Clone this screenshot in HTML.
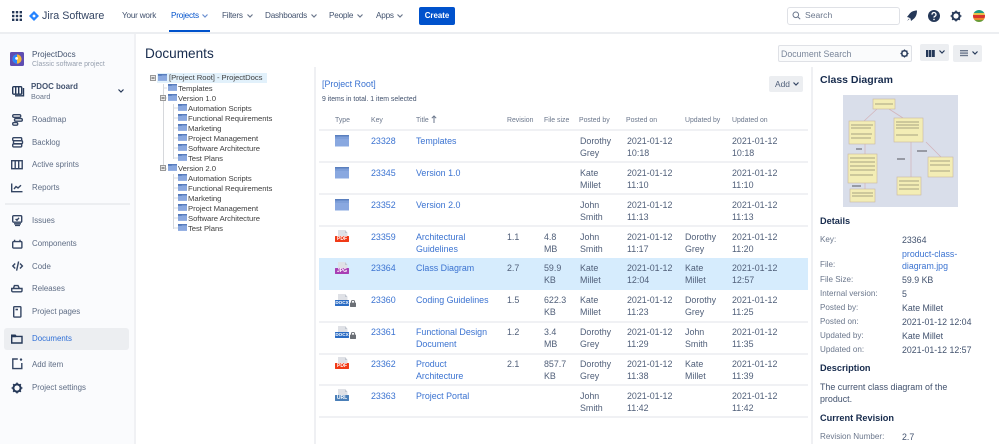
<!DOCTYPE html>
<html><head><meta charset="utf-8"><style>
html,body{margin:0;padding:0;width:999px;height:444px;overflow:hidden;background:#fff}
body{position:relative;font-family:"Liberation Sans",sans-serif;font-size:9px;color:#172b4d;filter:blur(.3px)}
.t{position:absolute;white-space:nowrap;line-height:12px}
.b{position:absolute}
svg{position:absolute;overflow:visible}
.n{font-size:8.2px;letter-spacing:-.22px;color:#42526e;top:10px}
.s{font-size:7.9px;color:#5e6c84;left:32px}
.tr{font-size:7.7px;letter-spacing:-.05px;color:#3f3f3f;line-height:10px}
.h{font-size:6.9px;color:#6b778c;top:114.5px}
.l{color:#3b73d1;font-size:8.9px}
.c{color:#505f79;font-size:8.9px}
.dk{font-size:8.1px;color:#6b778c;left:820px}
.dv{font-size:8.8px;color:#42526e;left:902px}
.dh{font-size:9.2px;font-weight:bold;color:#172b4d;left:820px}
.r{position:absolute;left:319px;width:489px;height:2px;background:#f0f1f4}
.i{fill:none;stroke:#344563;stroke-width:1.4}
</style></head><body>
<svg width="0" height="0"><defs>
<symbol id="f" viewBox="0 0 14 12"><rect width="14" height="11.5" fill="#7d9fdb"/><rect width="14" height="1.6" fill="#5a7fbe"/><path d="M0 3L5 1.8H14V11.5H0Z" fill="#89a8e0"/><path d="M0 3H14" stroke="#5f84c4" stroke-width=".5"/></symbol>
<symbol id="tf" viewBox="0 0 12 9"><rect width="12" height="9" fill="#8aa8df"/><rect width="12" height="1.6" fill="#4f76b8"/><rect x="0" y="0" width="5" height="2.2" fill="#4f76b8"/></symbol>
<symbol id="doc" viewBox="0 0 14 14"><path d="M3 0H10L12.5 3V12H3Z" fill="#dfe1e6"/><path d="M10 0L12.5 3H10Z" fill="#c1c7d0"/><rect x="0" y="6" width="14" height="6" rx=".5" fill="currentColor"/></symbol>
<symbol id="lk" viewBox="0 0 6 7"><rect x="0" y="2.6" width="6" height="4.4" rx=".6" fill="#6b6f76"/><path d="M1.4 3V1.8a1.6 1.6 0 0 1 3.2 0V3" fill="none" stroke="#6b6f76"/></symbol>
<symbol id="ck" viewBox="0 0 8 6"><path d="M1.5 1.5L4 4L6.5 1.5" fill="none" stroke="currentColor" stroke-width="1.2"/></symbol>
<symbol id="gear" viewBox="0 0 12 12"><circle cx="6" cy="6" r="3.6" fill="none" stroke="currentColor" stroke-width="2"/><path d="M6 .6V2M6 10V11.4M.6 6H2M10 6H11.4M2.2 2.2L3.2 3.2M8.8 8.8L9.8 9.8M2.2 9.8L3.2 8.8M8.8 3.2L9.8 2.2" stroke="currentColor" stroke-width="1.6"/></symbol>
</defs></svg>

<!-- top bar -->
<div class="b" style="left:0;top:32px;width:999px;height:2px;background:#eceef1"></div>
<svg style="left:12px;top:11px" width="10" height="10" fill="#253858"><rect width="2.4" height="2.4"/><rect x="3.8" width="2.4" height="2.4"/><rect x="7.6" width="2.4" height="2.4"/><rect y="3.8" width="2.4" height="2.4"/><rect x="3.8" y="3.8" width="2.4" height="2.4"/><rect x="7.6" y="3.8" width="2.4" height="2.4"/><rect y="7.6" width="2.4" height="2.4"/><rect x="3.8" y="7.6" width="2.4" height="2.4"/><rect x="7.6" y="7.6" width="2.4" height="2.4"/></svg>
<svg style="left:29px;top:11px" width="10" height="10"><path d="M5 0L10 5L5 10L0 5Z" fill="#2684ff"/><path d="M5 3.2L6.8 5L5 6.8L3.2 5Z" fill="#fff"/></svg>
<div class="t" style="left:42px;top:9px;font-size:10.7px;color:#344563;line-height:14px">Jira Software</div>
<div class="t n" style="left:122px">Your work</div>
<div class="t n" style="left:171px;color:#0052cc">Projects</div>
<svg style="left:201px;top:13px;color:#6b8fd0" width="8" height="6"><use href="#ck"/></svg>
<div class="b" style="left:169px;top:30px;width:41px;height:2px;background:#0052cc"></div>
<div class="t n" style="left:222px">Filters</div>
<svg style="left:246px;top:13px;color:#6b778c" width="8" height="6"><use href="#ck"/></svg>
<div class="t n" style="left:265px">Dashboards</div>
<svg style="left:310px;top:13px;color:#6b778c" width="8" height="6"><use href="#ck"/></svg>
<div class="t n" style="left:329px">People</div>
<svg style="left:356px;top:13px;color:#6b778c" width="8" height="6"><use href="#ck"/></svg>
<div class="t n" style="left:376px">Apps</div>
<svg style="left:396px;top:13px;color:#6b778c" width="8" height="6"><use href="#ck"/></svg>
<div class="b" style="left:419px;top:7px;width:36px;height:18px;background:#0052cc;border-radius:2px"></div>
<div class="t" style="left:419px;top:10px;width:36px;text-align:center;color:#fff;font-size:7.9px;font-weight:bold">Create</div>
<div class="b" style="left:787px;top:7px;width:111px;height:16px;border:1px solid #dfe1e6;border-radius:3px"></div>
<svg style="left:792px;top:11px" width="9" height="9" fill="none" stroke="#6b778c" stroke-width="1"><circle cx="3.8" cy="3.8" r="2.8"/><path d="M6 6L8.2 8.2"/></svg>
<div class="t" style="left:805px;top:9px;font-size:8.6px;color:#6b778c">Search</div>
<svg style="left:906px;top:10px" width="12" height="12" fill="#253858"><path d="M1 7L3 4.5C5 1.5 8 .5 11 .5C11 4 10 7 7.5 9L5 11L4.5 8.5L2.8 7.5Z"/><path d="M1 11L3 8.5L3.5 9Z"/></svg>
<svg style="left:928px;top:10px" width="12" height="12"><circle cx="6" cy="6" r="6" fill="#253858"/><path d="M4 4.6A2 2 0 1 1 6.6 6.4C6 6.7 6 7 6 7.6" fill="none" stroke="#fff" stroke-width="1.3"/><circle cx="6" cy="9.4" r=".8" fill="#fff"/></svg>
<svg style="left:950px;top:10px;color:#253858" width="12" height="12"><use href="#gear"/></svg>
<svg style="left:973px;top:10px" width="12" height="12"><defs><clipPath id="av"><circle cx="6" cy="6" r="6"/></clipPath></defs><g clip-path="url(#av)"><rect width="12" height="3" fill="#1f9a82"/><rect y="3" width="12" height="2" fill="#e8c14a"/><rect y="5" width="12" height="3" fill="#d9352c"/><rect y="8" width="12" height="2" fill="#e88a2d"/><rect y="10" width="12" height="2" fill="#6a9a35"/></g></svg>

<!-- sidebar -->
<div class="b" style="left:0;top:34px;width:134px;height:410px;background:#fafbfd;border-right:2px solid #f0f1f4"></div>
<svg style="left:10px;top:52px" width="14" height="14"><rect width="14" height="14" rx="1.5" fill="#5e4db2"/><circle cx="7" cy="7" r="4.6" fill="#f5b93a"/><path d="M7 2.4A4.6 4.6 0 0 0 7 11.6Z" fill="#2684ff"/><circle cx="6.6" cy="6.4" r="1.4" fill="#fff"/></svg>
<div class="t" style="left:32px;top:49px;font-size:8.1px;color:#42526e">ProjectDocs</div>
<div class="t" style="left:32px;top:59px;font-size:6.9px;color:#97a0af">Classic software project</div>
<svg class="i" style="left:12px;top:86px;stroke:#253858" width="13" height="11"><rect x=".7" y=".7" width="9" height="7.5" rx="1"/><path d="M3.7 .7V8M6.7 .7V8M11.5 2V9.8H3"/></svg>
<div class="t" style="left:31px;top:81px;font-size:7.9px;font-weight:bold;color:#42526e">PDOC board</div>
<div class="t" style="left:31px;top:91px;font-size:7.3px;color:#6b778c">Board</div>
<svg style="left:117px;top:88px;color:#253858" width="8" height="6"><use href="#ck"/></svg>

<svg class="i" style="left:12px;top:114px" width="11" height="12"><rect x=".7" y=".7" width="8" height="2.6" rx="1.2"/><rect x="2.5" y="4.6" width="7.8" height="2.6" rx="1.2"/><rect x=".7" y="8.6" width="5" height="2.6" rx="1.2"/></svg>
<svg class="i" style="left:12px;top:137px" width="11" height="11"><rect x=".7" y=".7" width="9" height="3" rx="1"/><rect x="1.5" y="3.7" width="9" height="3" rx="1"/><rect x=".7" y="6.9" width="9" height="3" rx="1"/></svg>
<svg class="i" style="left:11px;top:160px" width="12" height="10"><rect x=".7" y=".7" width="10.5" height="8"/><path d="M4.2 .7V8.7M7.7 .7V8.7"/></svg>
<svg class="i" style="left:11px;top:183px" width="12" height="10"><path d="M.7 .5V8.7H11.5M3 6L5 3.6L7 5L10 2.2"/></svg>
<div class="t s" style="top:114px">Roadmap</div>
<div class="t s" style="top:137px">Backlog</div>
<div class="t s" style="top:159px">Active sprints</div>
<div class="t s" style="top:182px">Reports</div>
<div class="b" style="left:5px;top:203px;width:125px;height:2px;background:#eceef1"></div>
<svg class="i" style="left:12px;top:215px" width="11" height="11"><rect x=".7" y=".7" width="9" height="6.5" rx="1"/><path d="M2 8.8H9M3 10.4H8M3.6 4L5 5.2L7 2.8"/></svg>
<svg class="i" style="left:12px;top:239px" width="11" height="10"><rect x=".7" y="2.6" width="9.2" height="6.5" rx="1"/><path d="M2.6 2.6V.8M8 2.6V.8"/></svg>
<svg class="i" style="left:12px;top:261px" width="11" height="11"><path d="M3.2 2.5L.8 5L3.2 7.5M8 2.5L10.4 5L8 7.5M6.6 .5L4.6 9.6"/></svg>
<svg class="i" style="left:11px;top:283px" width="12" height="10"><path d="M.7 5.5H11V7.5C11 8.5 10.5 8.8 9.8 8.8H2C1.2 8.8.7 8.5.7 7.5ZM2.4 5.5L3.4 2.6H7L8.4 5.5"/></svg>
<svg class="i" style="left:13px;top:306px" width="9" height="12"><rect x=".7" y=".7" width="7.2" height="10.4" rx=".8"/><path d="M2.5 3.5H5" stroke-width="1.6"/></svg>
<div class="t s" style="top:215px">Issues</div>
<div class="t s" style="top:238px">Components</div>
<div class="t s" style="top:261px">Code</div>
<div class="t s" style="top:283px">Releases</div>
<div class="t s" style="top:306px">Project pages</div>
<div class="b" style="left:4px;top:328px;width:125px;height:22px;background:#eceef1;border-radius:3px"></div>
<svg class="i" style="left:11px;top:334px;stroke:#253858" width="12" height="10"><path d="M.7 9V1.2H4.2L5.2 2.4H11V9ZM.7 2.6H5"/></svg>
<div class="t s" style="top:333px;color:#2f6fd6">Documents</div>
<svg class="i" style="left:12px;top:358px" width="11" height="12"><path d="M5.8 1H.8V10.6H9.8V5"/><circle cx="9" cy="1.6" r="1.2" fill="#344563" stroke="none"/></svg>
<div class="t s" style="top:359px">Add item</div>
<svg style="left:11px;top:382px;color:#253858" width="12" height="12"><use href="#gear"/></svg>
<div class="t s" style="top:382px">Project settings</div>

<!-- heading -->
<div class="t" style="left:145px;top:44.5px;font-size:13.6px;line-height:17px;color:#172b4d">Documents</div>

<!-- search tools -->
<div class="b" style="left:778px;top:45px;width:132px;height:15px;border:1px solid #dfe1e6;border-radius:2px;background:#fafbfc"></div>
<div class="t" style="left:781px;top:48px;font-size:8.8px;color:#7a869a">Document Search</div>
<svg style="left:900px;top:49px;color:#253858" width="9" height="9"><use href="#gear"/></svg>
<div class="b" style="left:920px;top:44px;width:29px;height:17px;background:#eceef1;border-radius:2px"></div>
<svg style="left:926px;top:50px" width="9" height="7" fill="#253858"><rect width="2" height="7"/><rect x="2.6" width="2.6" height="7"/><rect x="5.8" width="3" height="7"/></svg>
<svg style="left:938px;top:49px;color:#253858" width="8" height="6"><use href="#ck"/></svg>
<div class="b" style="left:953px;top:45px;width:29px;height:17px;background:#eceef1;border-radius:2px"></div>
<svg style="left:960px;top:50px" width="8" height="7" fill="#6b778c"><rect width="8" height="1.4"/><rect y="2.4" width="8" height="1.4"/><rect y="4.8" width="8" height="1.4"/></svg>
<svg style="left:971px;top:50px;color:#253858" width="8" height="6"><use href="#ck"/></svg>

<!-- tree -->
<svg style="left:148px;top:72px" width="165" height="165" fill="none" stroke="#d6d8dc" stroke-width="1">
<path d="M15.5 12V97M15.5 16H19M15.5 26H19M15.5 97H19"/>
<path d="M25.5 32V87M25.5 36H30M25.5 46H30M25.5 56H30M25.5 66H30M25.5 76H30M25.5 86H30"/>
<path d="M25.5 102V157M25.5 106H30M25.5 116H30M25.5 126H30M25.5 136H30M25.5 146H30M25.5 156H30"/>
</svg>
<div class="b" style="left:157px;top:73px;width:110px;height:9.5px;background:#e2f1fb"></div>
<svg style="left:150px;top:75px" width="6" height="6"><rect x=".5" y=".5" width="5" height="5" fill="#e8e8e8" stroke="#999"/><path d="M1.5 3H4.5" stroke="#444"/></svg>
<svg style="left:160px;top:95px" width="6" height="6"><rect x=".5" y=".5" width="5" height="5" fill="#e8e8e8" stroke="#999"/><path d="M1.5 3H4.5" stroke="#444"/></svg>
<svg style="left:160px;top:165px" width="6" height="6"><rect x=".5" y=".5" width="5" height="5" fill="#e8e8e8" stroke="#999"/><path d="M1.5 3H4.5" stroke="#444"/></svg>
<svg style="left:158px;top:74px" width="9" height="7"><use href="#tf"/></svg>
<svg style="left:168px;top:84px" width="9" height="7"><use href="#tf"/></svg>
<svg style="left:168px;top:94px" width="9" height="7"><use href="#tf"/></svg>
<svg style="left:178px;top:104px" width="9" height="7"><use href="#tf"/></svg>
<svg style="left:178px;top:114px" width="9" height="7"><use href="#tf"/></svg>
<svg style="left:178px;top:124px" width="9" height="7"><use href="#tf"/></svg>
<svg style="left:178px;top:134px" width="9" height="7"><use href="#tf"/></svg>
<svg style="left:178px;top:144px" width="9" height="7"><use href="#tf"/></svg>
<svg style="left:178px;top:154px" width="9" height="7"><use href="#tf"/></svg>
<svg style="left:168px;top:164px" width="9" height="7"><use href="#tf"/></svg>
<svg style="left:178px;top:174px" width="9" height="7"><use href="#tf"/></svg>
<svg style="left:178px;top:184px" width="9" height="7"><use href="#tf"/></svg>
<svg style="left:178px;top:194px" width="9" height="7"><use href="#tf"/></svg>
<svg style="left:178px;top:204px" width="9" height="7"><use href="#tf"/></svg>
<svg style="left:178px;top:214px" width="9" height="7"><use href="#tf"/></svg>
<svg style="left:178px;top:224px" width="9" height="7"><use href="#tf"/></svg>
<div class="t tr" style="left:169px;top:73px">[Project Root] - ProjectDocs</div>
<div class="t tr" style="left:178px;top:83.5px">Templates</div>
<div class="t tr" style="left:178px;top:93.5px">Version 1.0</div>
<div class="t tr" style="left:188px;top:103.5px">Automation Scripts</div>
<div class="t tr" style="left:188px;top:113.5px">Functional Requirements</div>
<div class="t tr" style="left:188px;top:123.5px">Marketing</div>
<div class="t tr" style="left:188px;top:133.5px">Project Management</div>
<div class="t tr" style="left:188px;top:143.5px">Software Architecture</div>
<div class="t tr" style="left:188px;top:153.5px">Test Plans</div>
<div class="t tr" style="left:178px;top:163.5px">Version 2.0</div>
<div class="t tr" style="left:188px;top:173.5px">Automation Scripts</div>
<div class="t tr" style="left:188px;top:183.5px">Functional Requirements</div>
<div class="t tr" style="left:188px;top:193.5px">Marketing</div>
<div class="t tr" style="left:188px;top:203.5px">Project Management</div>
<div class="t tr" style="left:188px;top:213.5px">Software Architecture</div>
<div class="t tr" style="left:188px;top:223.5px">Test Plans</div>

<!-- dividers -->
<div class="b" style="left:314px;top:67px;width:2px;height:377px;background:#eff0f3"></div>
<div class="b" style="left:811px;top:67px;width:2px;height:377px;background:#eff0f3"></div>

<!-- table header -->
<div class="t" style="left:322px;top:78px;font-size:8.9px;color:#3b73d1">[Project Root]</div>
<div class="t" style="left:322px;top:94px;font-size:6.9px;color:#42526e">9 items in total. 1 item selected</div>
<div class="b" style="left:769px;top:76px;width:34px;height:16px;background:#eceef1;border-radius:2px"></div>
<div class="t" style="left:775px;top:78px;font-size:8.4px;color:#505f79">Add</div>
<svg style="left:792px;top:81px;color:#344563" width="8" height="6"><use href="#ck"/></svg>
<div class="t h" style="left:335px">Type</div>
<div class="t h" style="left:371px">Key</div>
<div class="t h" style="left:416px">Title</div>
<svg style="left:431px;top:115px" width="6" height="8" fill="none" stroke="#6b778c" stroke-width="1"><path d="M3 8V1M.8 3.2L3 1L5.2 3.2"/></svg>
<div class="t h" style="left:507px">Revision</div>
<div class="t h" style="left:544px">File size</div>
<div class="t h" style="left:579px">Posted by</div>
<div class="t h" style="left:626px">Posted on</div>
<div class="t h" style="left:685px">Updated by</div>
<div class="t h" style="left:732px">Updated on</div>

<div class="b" style="left:319px;top:258px;width:489px;height:32px;background:#d6ecfd"></div>
<div class="r" style="top:128.5px"></div>
<div class="r" style="top:160.5px"></div>
<div class="r" style="top:192.5px"></div>
<div class="r" style="top:224.5px"></div>
<div class="r" style="top:320.5px"></div>
<div class="r" style="top:352.5px"></div>
<div class="r" style="top:384px"></div>
<div class="r" style="top:416px"></div>

<!-- icons -->
<svg style="left:335px;top:135px" width="14" height="12"><use href="#f"/></svg>
<svg style="left:335px;top:167px" width="14" height="12"><use href="#f"/></svg>
<svg style="left:335px;top:199px" width="14" height="12"><use href="#f"/></svg>
<svg style="left:335px;top:230px;color:#f03a17" width="14" height="14"><use href="#doc"/></svg>
<div class="t" style="left:335px;top:236px;width:14px;text-align:center;font-size:5px;line-height:6px;color:#fff;font-weight:bold">PDF</div>
<svg style="left:335px;top:262px;color:#a83fb4" width="14" height="14"><use href="#doc"/></svg>
<div class="t" style="left:335px;top:268px;width:14px;text-align:center;font-size:5px;line-height:6px;color:#fff;font-weight:bold">JPG</div>
<svg style="left:335px;top:294px;color:#2b6cc4" width="14" height="14"><use href="#doc"/></svg>
<div class="t" style="left:335px;top:300px;width:14px;text-align:center;font-size:4.6px;line-height:6px;color:#fff;font-weight:bold">DOCX</div>
<svg style="left:350px;top:300px" width="6" height="7"><use href="#lk"/></svg>
<svg style="left:335px;top:326px;color:#2b6cc4" width="14" height="14"><use href="#doc"/></svg>
<div class="t" style="left:335px;top:332px;width:14px;text-align:center;font-size:4.6px;line-height:6px;color:#fff;font-weight:bold">DOCX</div>
<svg style="left:350px;top:332px" width="6" height="7"><use href="#lk"/></svg>
<svg style="left:335px;top:357px;color:#f03a17" width="14" height="14"><use href="#doc"/></svg>
<div class="t" style="left:335px;top:363px;width:14px;text-align:center;font-size:5px;line-height:6px;color:#fff;font-weight:bold">PDF</div>
<svg style="left:335px;top:389px;color:#4a7fb8" width="14" height="14"><use href="#doc"/></svg>
<div class="t" style="left:335px;top:395px;width:14px;text-align:center;font-size:5px;line-height:6px;color:#fff;font-weight:bold">URL</div>

<!-- rows -->
<div class="t l" style="left:371px;top:135px">23328</div><div class="t l" style="left:416px;top:135px">Templates</div>
<div class="t c" style="left:580px;top:135px;line-height:12px">Dorothy<br>Grey</div><div class="t c" style="left:627px;top:135px">2021-01-12<br>10:18</div><div class="t c" style="left:732px;top:135px">2021-01-12<br>10:18</div>

<div class="t l" style="left:371px;top:167px">23345</div><div class="t l" style="left:416px;top:167px">Version 1.0</div>
<div class="t c" style="left:580px;top:167px">Kate<br>Millet</div><div class="t c" style="left:627px;top:167px">2021-01-12<br>11:10</div><div class="t c" style="left:732px;top:167px">2021-01-12<br>11:10</div>

<div class="t l" style="left:371px;top:199px">23352</div><div class="t l" style="left:416px;top:199px">Version 2.0</div>
<div class="t c" style="left:580px;top:199px">John<br>Smith</div><div class="t c" style="left:627px;top:199px">2021-01-12<br>11:13</div><div class="t c" style="left:732px;top:199px">2021-01-12<br>11:13</div>

<div class="t l" style="left:371px;top:231px">23359</div><div class="t l" style="left:416px;top:231px">Architectural<br>Guidelines</div><div class="t c" style="left:507px;top:231px">1.1</div><div class="t c" style="left:544px;top:231px">4.8<br>MB</div>
<div class="t c" style="left:580px;top:231px">John<br>Smith</div><div class="t c" style="left:627px;top:231px">2021-01-12<br>11:17</div><div class="t c" style="left:685px;top:231px">Dorothy<br>Grey</div><div class="t c" style="left:732px;top:231px">2021-01-12<br>11:20</div>

<div class="t l" style="left:371px;top:262px">23364</div><div class="t l" style="left:416px;top:262px">Class Diagram</div><div class="t c" style="left:507px;top:262px">2.7</div><div class="t c" style="left:544px;top:262px">59.9<br>KB</div>
<div class="t c" style="left:580px;top:262px">Kate<br>Millet</div><div class="t c" style="left:627px;top:262px">2021-01-12<br>12:04</div><div class="t c" style="left:685px;top:262px">Kate<br>Millet</div><div class="t c" style="left:732px;top:262px">2021-01-12<br>12:57</div>

<div class="t l" style="left:371px;top:294px">23360</div><div class="t l" style="left:416px;top:294px">Coding Guidelines</div><div class="t c" style="left:507px;top:294px">1.5</div><div class="t c" style="left:544px;top:294px">622.3<br>KB</div>
<div class="t c" style="left:580px;top:294px">Kate<br>Millet</div><div class="t c" style="left:627px;top:294px">2021-01-12<br>11:23</div><div class="t c" style="left:685px;top:294px">Dorothy<br>Grey</div><div class="t c" style="left:732px;top:294px">2021-01-12<br>11:25</div>

<div class="t l" style="left:371px;top:326px">23361</div><div class="t l" style="left:416px;top:326px">Functional Design<br>Document</div><div class="t c" style="left:507px;top:326px">1.2</div><div class="t c" style="left:544px;top:326px">3.4<br>MB</div>
<div class="t c" style="left:580px;top:326px">Dorothy<br>Grey</div><div class="t c" style="left:627px;top:326px">2021-01-12<br>11:29</div><div class="t c" style="left:685px;top:326px">John<br>Smith</div><div class="t c" style="left:732px;top:326px">2021-01-12<br>11:35</div>

<div class="t l" style="left:371px;top:358px">23362</div><div class="t l" style="left:416px;top:358px">Product<br>Architecture</div><div class="t c" style="left:507px;top:358px">2.1</div><div class="t c" style="left:544px;top:358px">857.7<br>KB</div>
<div class="t c" style="left:580px;top:358px">Dorothy<br>Grey</div><div class="t c" style="left:627px;top:358px">2021-01-12<br>11:38</div><div class="t c" style="left:685px;top:358px">Kate<br>Millet</div><div class="t c" style="left:732px;top:358px">2021-01-12<br>11:39</div>

<div class="t l" style="left:371px;top:390px">23363</div><div class="t l" style="left:416px;top:390px">Project Portal</div>
<div class="t c" style="left:580px;top:390px">John<br>Smith</div><div class="t c" style="left:627px;top:390px">2021-01-12<br>11:42</div><div class="t c" style="left:732px;top:390px">2021-01-12<br>11:42</div>

<!-- detail panel -->
<div class="t" style="left:820px;top:73px;font-size:10.5px;line-height:14px;font-weight:bold;color:#172b4d">Class Diagram</div>
<svg style="left:843px;top:95px" width="115" height="112">
<rect width="115" height="112" fill="#d9deea"/>
<g stroke="#d3b5bc" stroke-width=".8" fill="none"><path d="M34 14L21 26M46 14L60 23M22 49V59M22 88V94M68 47V82M83 47L98 62"/></g>
<g fill="#f3edb5" stroke="#c9b8a0" stroke-width=".6">
<rect x="30" y="4" width="22" height="10"/>
<rect x="6" y="26" width="26" height="23"/>
<rect x="51" y="23" width="29" height="24"/>
<rect x="5" y="59" width="29" height="29"/>
<rect x="85" y="62" width="25" height="20"/>
<rect x="54" y="82" width="24" height="18"/>
<rect x="7" y="94" width="25" height="13"/>
</g>
<g stroke="#8f8a70" stroke-width=".8"><path d="M32 9H50M8 30H30M8 33H28M8 39H29M8 43H28M53 27H76M53 30H76M53 33H76M53 40H75M7 63H32M7 67H32M7 71H32M7 75H32M7 80H30M87 66H107M87 70H107M87 76H107M56 86H76M56 90H76M56 94H76M9 98H30M9 101H30"/></g>
<g stroke="#55565f" stroke-width="1"><path d="M13 54H19M54 64H62M9 91H18M74 56H84"/></g>
</svg>
<div class="t dh" style="top:215px">Details</div>
<div class="t dk" style="top:233.5px">Key:</div><div class="t dv" style="top:233.5px">23364</div>
<div class="t dk" style="top:259px">File:</div><div class="t dv" style="top:248px;color:#3b73d1">product-class-<br>diagram.jpg</div>
<div class="t dk" style="top:273.5px">File Size:</div><div class="t dv" style="top:273.5px">59.9 KB</div>
<div class="t dk" style="top:287.5px">Internal version:</div><div class="t dv" style="top:287.5px">5</div>
<div class="t dk" style="top:301.5px">Posted by:</div><div class="t dv" style="top:301.5px">Kate Millet</div>
<div class="t dk" style="top:315.5px">Posted on:</div><div class="t dv" style="top:315.5px">2021-01-12 12:04</div>
<div class="t dk" style="top:329.5px">Updated by:</div><div class="t dv" style="top:329.5px">Kate Millet</div>
<div class="t dk" style="top:343.5px">Updated on:</div><div class="t dv" style="top:343.5px">2021-01-12 12:57</div>
<div class="t dh" style="top:362px">Description</div>
<div class="t" style="left:820px;top:381px;font-size:8.9px;color:#42526e">The current class diagram of the<br>product.</div>
<div class="t dh" style="top:412px">Current Revision</div>
<div class="t dk" style="top:431px">Revision Number:</div><div class="t dv" style="top:431px">2.7</div>
</body></html>
